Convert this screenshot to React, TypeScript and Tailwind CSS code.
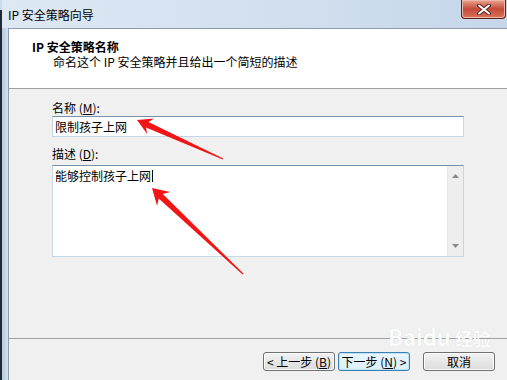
import React from "react"

const font = { fontFamily: '"Noto Sans CJK SC", "Liberation Sans", sans-serif' }

function arrowPoints(tx: number, ty: number, ex: number, ey: number, L: number, W: number, w1: number) {
  const dx = ex - tx
  const dy = ey - ty
  const len = Math.hypot(dx, dy)
  const ux = dx / len
  const uy = dy / len
  const nx = -uy
  const ny = ux
  const p = (a: number, b: number) => `${a.toFixed(1)},${b.toFixed(1)}`
  return [
    p(tx, ty),
    p(tx + ux * L + nx * W, ty + uy * L + ny * W),
    p(tx + ux * L * 0.75 + nx * w1, ty + uy * L * 0.75 + ny * w1),
    p(ex + nx * 0.6, ey + ny * 0.6),
    p(ex - nx * 0.6, ey - ny * 0.6),
    p(tx + ux * L * 0.75 - nx * w1, ty + uy * L * 0.75 - ny * w1),
    p(tx + ux * L - nx * W, ty + uy * L - ny * W),
  ].join(" ")
}

function Btn({ children, focused }: { children: React.ReactNode; focused?: boolean }) {
  return (
    <button
      className={
        "flex h-[19px] w-[72px] items-center justify-center rounded-[3px] border text-[12px] leading-none text-black " +
        (focused
          ? "border-[#3c7fb1] bg-gradient-to-b from-[#eaf6fd] to-[#d9f0fc] shadow-[inset_0_0_0_1px_#bfe3f7]"
          : "border-[#707070] bg-gradient-to-b from-[#f2f2f2] to-[#dcdcdc] shadow-[inset_0_0_0_1px_#fcfcfc]")
      }
    >
      {children}
    </button>
  )
}

export default function App() {
  return (
    <div className="relative flex h-[380px] w-[507px] overflow-hidden bg-[#cbdaeb]" style={font}>
      <div className="mt-[10px] w-[2px] bg-[#1e2a37]" />
      <div className="flex flex-1 flex-col">
        {/* title bar */}
        <div className="flex h-[28px] items-start justify-between bg-gradient-to-r from-[#dde8f4] via-[#d3e0ee] to-[#c6d7ea]">
          <span className="mt-[8px] pl-[6px] text-[12px] leading-[14px] text-black">IP 安全策略向导</span>
          <div className="mr-[1px] flex h-[19px] w-[45px] items-center justify-center rounded-b-[4px] border border-t-0 border-[#5b2019] bg-gradient-to-b from-[#e8a493] via-[#c44a36] to-[#d8735a] shadow-[inset_0_0_0_1px_#f0b7a8]">
            <svg width="14" height="11" viewBox="0 0 14 11">
              <path d="M2 1.5 L12 9.5 M12 1.5 L2 9.5" stroke="#5a2a24" strokeWidth="4" strokeLinecap="round" />
              <path d="M2 1.5 L12 9.5 M12 1.5 L2 9.5" stroke="#ffffff" strokeWidth="2" strokeLinecap="round" />
            </svg>
          </div>
        </div>

        <div className="flex flex-1">
          <div className="w-[6px] bg-gradient-to-r from-[#b7c9dd] to-[#d3e1ef]" />
          <div className="flex flex-1 flex-col border-l border-t border-[#8d9cad]">
            {/* header */}
            <div className="h-[60px] border-b border-[#a0a0a0] bg-white pl-[23px] pt-[11px]">
              <div className="text-[12px] font-bold leading-[14px] text-black">IP 安全策略名称</div>
              <div className="pl-[21px] text-[12px] leading-[16px] text-black">命名这个 IP 安全策略并且给出一个简短的描述</div>
            </div>

            {/* body */}
            <div className="h-[250px] border-b border-[#a0a0a0] bg-[#f0f0f0] pl-[43px] pt-[12px]">
              <div className="text-[12px] leading-[13px] text-black">
                名称 (<span className="underline">M</span>):
              </div>
              <div className="mt-[2px] flex h-[21px] w-[412px] items-center border border-[#c4d7e5] border-t-[#7590a7] bg-white pl-[2px] text-[12px] text-black">
                限制孩子上网
              </div>
              <div className="mt-[10px] text-[12px] leading-[13px] text-black">
                描述 (<span className="underline">D</span>):
              </div>
              <div className="mt-[5px] flex h-[92px] w-[412px] border border-[#c4d7e5] border-t-[#7590a7] bg-white">
                <div className="flex flex-1 items-start pl-[2px] pt-[2px] text-[12px] leading-[16px] text-black">
                  能够控制孩子上网<span className="ml-[1px] mt-[2px] inline-block h-[12px] w-px bg-black" />
                </div>
                <div className="flex w-[16px] flex-col items-center justify-between border-l border-[#e6e6e6] bg-[#eeeeee] py-[8px]">
                  <svg width="7" height="4" viewBox="0 0 7 4">
                    <path d="M0 4 L3.5 0 L7 4 Z" fill="#8a8a8a" />
                  </svg>
                  <svg width="7" height="4" viewBox="0 0 7 4">
                    <path d="M0 0 L3.5 4 L7 0 Z" fill="#8a8a8a" />
                  </svg>
                </div>
              </div>
            </div>

            {/* footer */}
            <div className="flex flex-1 items-start justify-end bg-[#f0f0f0] pr-[12px] pt-[13px]">
              <Btn>
                &lt; 上一步 (<span className="underline">B</span>)
              </Btn>
              <div className="ml-[3px]">
                <Btn focused>
                  下一步 (<span className="underline">N</span>) &gt;
                </Btn>
              </div>
              <div className="ml-[13px]">
                <Btn>取消</Btn>
              </div>
            </div>
          </div>
        </div>
      </div>

      {/* watermark */}
      <div className="pointer-events-none absolute left-[388px] top-[325px] text-[22px] font-bold leading-none text-[#fbfbfb] [text-shadow:0_0_1px_rgba(0,0,0,0.12)]">
        Baidu<span className="ml-[4px] text-[18px]">经验</span>
      </div>

      {/* red arrows */}
      <svg className="pointer-events-none absolute left-0 top-0" width="507" height="380">
        <polygon points={arrowPoints(137, 120, 223, 159, 15, 8.5, 3)} fill="#f21515" />
        <polygon points={arrowPoints(152, 188, 243, 274, 16, 9.5, 3)} fill="#f21515" />
      </svg>
    </div>
  )
}
